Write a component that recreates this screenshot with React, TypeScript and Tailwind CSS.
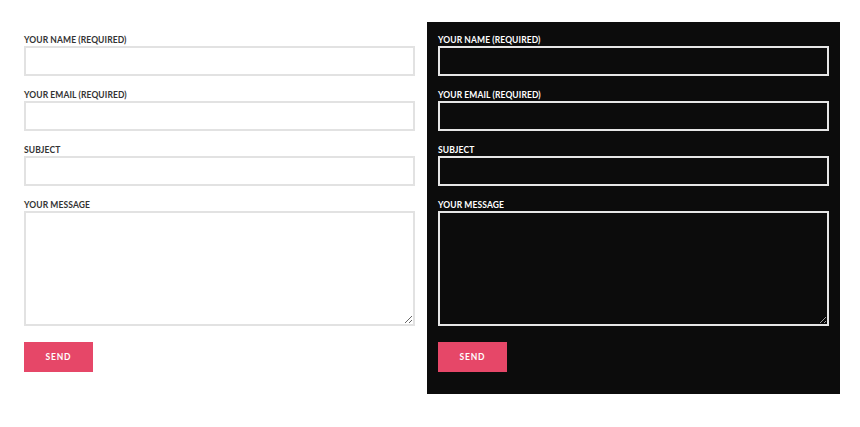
import React from 'react';

const fields = [
  { label: 'YOUR NAME (REQUIRED)', type: 'text' },
  { label: 'YOUR EMAIL (REQUIRED)', type: 'email' },
  { label: 'SUBJECT', type: 'text' },
];

function ContactForm({ dark }: { dark?: boolean }) {
  const label = dark ? 'text-white' : 'text-[#333]';
  const box = dark
    ? 'border-2 border-[#e6e6e6] bg-[#0c0c0c] text-white'
    : 'border-2 border-[#e2e2e2] bg-white text-[#333]';
  return (
    <form className="flex flex-col" onSubmit={e => e.preventDefault()}>
      {fields.map(f => (
        <div key={f.label} className="mb-[14px] flex flex-col">
          <label className={`mb-px text-[8.5px] font-bold leading-[10px] tracking-[0.1px] ${label}`}>{f.label}</label>
          <input type={f.type} className={`block h-[30px] w-full outline-none ${box}`} />
        </div>
      ))}
      <div className="mb-[16px] flex flex-col">
        <label className={`mb-px text-[8.5px] font-bold leading-[10px] tracking-[0.1px] ${label}`}>YOUR MESSAGE</label>
        <textarea className={`block h-[115px] w-full resize-y outline-none ${box}`} />
      </div>
      <button
        type="submit"
        className="h-[30px] w-[69px] bg-[#e64768] text-[8.5px] font-bold tracking-[0.8px] text-white"
      >
        SEND
      </button>
    </form>
  );
}

export default function App() {
  return (
    <div
      className="flex h-[427px] w-[860px] items-start bg-white pl-[13px] pt-[22px]"
      style={{ fontFamily: 'Lato, "Open Sans", sans-serif' }}
    >
      <div className="w-[413px] px-[11px] pt-[13px]">
        <ContactForm />
      </div>
      <div className="ml-px h-[372px] w-[413px] bg-[#0c0c0c] px-[11px] pt-[13px]">
        <ContactForm dark />
      </div>
    </div>
  );
}
